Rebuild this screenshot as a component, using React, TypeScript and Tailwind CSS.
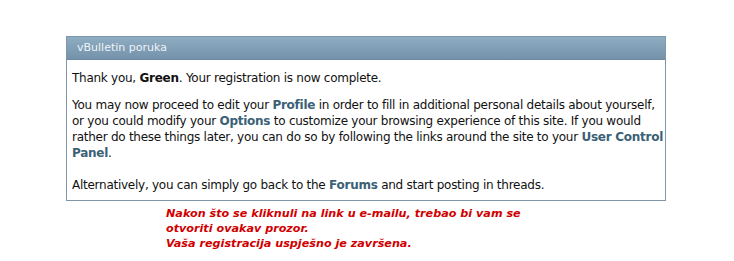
export default function App() {
  return (
    <div className="w-[734px] h-[261px] bg-white pt-[36px] pl-[66px] font-['DejaVu_Sans',sans-serif]">
      {/* message box */}
      <div className="w-[600px] border border-[#7f97a8]">
        <div className="h-[23px] bg-gradient-to-b from-[#8eacc2] to-[#7492a9] border-b border-[#6f8aa0] pl-[10px] text-[11px] leading-[22px] text-[#eef3f7]">
          vBulletin poruka
        </div>
        <div className="px-[5px] pt-[10px] pb-[7px] text-[12px] leading-[16px] tracking-[-0.26px] text-[#111] whitespace-nowrap">
          <p>
            Thank you, <b>Green</b>. Your registration is now complete.
          </p>
          <p className="mt-[11px]">
            You may now proceed to edit your <b className="text-[#3a6176]">Profile</b> in order to fill in additional personal details about yourself,
            <br />
            or you could modify your <b className="text-[#3a6176]">Options</b> to customize your browsing experience of this site. If you would
            <br />
            rather do these things later, you can do so by following the links around the site to your{" "}
            <b className="text-[#3a6176]">User Control</b>
            <br />
            <b className="text-[#3a6176]">Panel</b>.
          </p>
          <p className="mt-[16px]">
            Alternatively, you can simply go back to the <b className="text-[#3a6176]">Forums</b> and start posting in threads.
          </p>
        </div>
      </div>
      {/* note */}
      <p className="ml-[100px] mt-[5px] text-[11.2px] leading-[15px] font-bold italic text-[#d00000]">
        Nakon što se kliknuli na link u e-mailu, trebao bi vam se
        <br />
        otvoriti ovakav prozor.
        <br />
        Vaša registracija uspješno je završena.
      </p>
    </div>
  );
}
